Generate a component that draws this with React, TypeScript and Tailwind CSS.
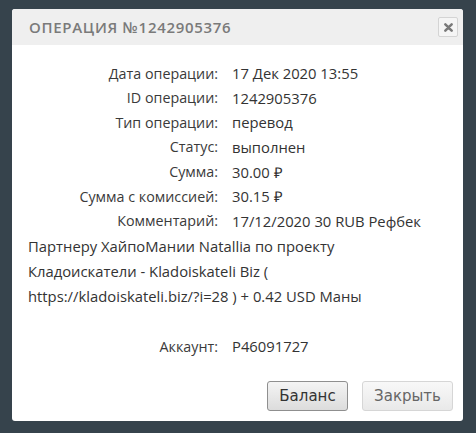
const rows: [string, string][] = [
  ["Дата операции:", "17 Дек 2020 13:55"],
  ["ID операции:", "1242905376"],
  ["Тип операции:", "перевод"],
  ["Статус:", "выполнен"],
  ["Сумма:", "30.00 ₽"],
  ["Сумма с комиссией:", "30.15 ₽"],
];

const Row = ({ label, value }: { label: string; value: string }) => (
  <div className="flex h-[24.6px] items-center">
    <span className="w-[190px] shrink-0 text-right text-[14.3px] font-medium text-[#3a3a3a]">{label}</span>
    <span className="ml-[14px]">{value}</span>
  </div>
);

export default function App() {
  return (
    <div className="h-[433px] w-[476px] bg-[#36434c] pt-[9px] pl-[12px]">
      <div
        className="flex h-[412px] w-[451px] flex-col overflow-hidden rounded-[3px] bg-white text-[14.8px] text-[#333]"
        style={{ fontFamily: '"Open Sans", sans-serif' }}
      >
        <div className="flex h-[36px] shrink-0 items-center justify-between bg-[#efefef] pl-[17px] pr-[5px]">
          <span className="text-[15px] font-semibold tracking-[0.7px] text-[#7a7a7a]">
            ОПЕРАЦИЯ №1242905376
          </span>
          <button className="flex h-[20px] w-[20px] items-center justify-center rounded-[2px] border border-[#d4d4d4] bg-[#f5f5f5]">
            <svg width="9" height="9" viewBox="0 0 10 10">
              <path d="M1.5 1.5 L8.5 8.5 M8.5 1.5 L1.5 8.5" stroke="#7a7a7a" strokeWidth="2.8" strokeLinecap="round" />
            </svg>
          </button>
        </div>
        <div className="flex flex-col pt-[16px] pl-[16px]">
          {rows.map(([l, v]) => (
            <Row key={l} label={l} value={v} />
          ))}
          <Row label="Комментарий:" value="17/12/2020 30 RUB Рефбек" />
          <div className="flex h-[25px] items-center">Партнеру ХайпоМании Natallia по проекту</div>
          <div className="flex h-[25px] items-center">Кладоискатели - Kladoiskateli Biz (</div>
          <div className="flex h-[25px] items-center">https://kladoiskateli.biz/?i=28 ) + 0.42 USD Маны</div>
          <div className="h-[26px]" />
          <Row label="Аккаунт:" value="P46091727" />
        </div>
        <div
          className="mt-auto mb-[10px] flex justify-end gap-[14px] pr-[10px] text-[15px]"
          style={{ fontFamily: '"DejaVu Sans", sans-serif' }}
        >
          <button className="h-[30px] w-[81px] rounded-[3px] border border-[#8f8f8f] bg-gradient-to-b from-[#f4f4f4] to-[#dcdcdc] text-[#333]">
            Баланс
          </button>
          <button className="h-[30px] w-[91px] rounded-[3px] border border-[#d6d6d6] bg-gradient-to-b from-[#f8f8f8] to-[#e9e9e9] text-[#666]">
            Закрыть
          </button>
        </div>
      </div>
    </div>
  );
}
